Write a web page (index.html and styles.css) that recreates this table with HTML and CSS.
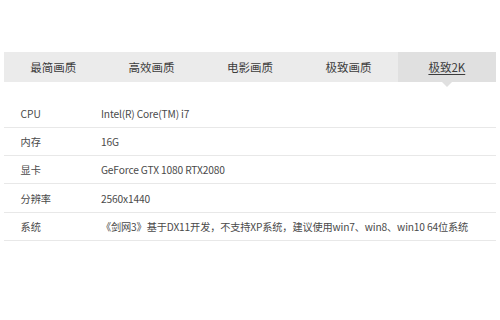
FILE: index.html
```html
<!DOCTYPE html>
<html lang="zh-CN">
<head>
<meta charset="utf-8">
<title>配置</title>
<link rel="stylesheet" href="styles.css">
</head>
<body>
<div class="panel">
  <ul class="tabs">
    <li class="tab">最简画质</li>
    <li class="tab">高效画质</li>
    <li class="tab">电影画质</li>
    <li class="tab">极致画质</li>
    <li class="tab active"><span class="tab-label">极致2K</span></li>
  </ul>
  <div class="specs">
    <div class="row"><div class="key">CPU</div><div class="val">Intel(R) Core(TM) i7</div></div>
    <div class="row"><div class="key">内存</div><div class="val">16G</div></div>
    <div class="row"><div class="key">显卡</div><div class="val">GeForce GTX 1080 RTX2080</div></div>
    <div class="row"><div class="key">分辨率</div><div class="val">2560x1440</div></div>
    <div class="row"><div class="key">系统</div><div class="val">《剑网3》基于DX11开发，不支持XP系统，建议使用win7、win8、win10 64位系统</div></div>
  </div>
</div>
</body>
</html>
```
FILE: styles.css
```css
html, body {
  margin: 0;
  padding: 0;
  background: #ffffff;
}
body {
  font-family: "Noto Sans CJK SC", "Noto Sans", sans-serif;
  color: #4a4a4a;
}
.panel {
  margin: 52px 4px 0 4px;
  width: 492px;
}
.tabs {
  list-style: none;
  margin: 0;
  padding: 0;
  display: flex;
  height: 30px;
  background: #ebebeb;
  font-size: 11.5px;
}
.tab {
  flex: 1 1 0;
  display: flex;
  align-items: center;
  justify-content: center;
  color: #3c3c3c;
  position: relative;
}
.tab.active {
  background: #e0e0e0;
}
.tab.active::after {
  content: "";
  position: absolute;
  left: 50%;
  top: 100%;
  margin-left: -5px;
  border-left: 5px solid transparent;
  border-right: 5px solid transparent;
  border-top: 5px solid #e0e0e0;
}
.tab-label {
  text-decoration: underline;
  text-underline-offset: 2px;
}
.specs {
  margin-top: 17.4px;
  font-size: 10.2px;
}
.row {
  display: flex;
  align-items: center;
  height: 28.33px;
  box-sizing: border-box;
  border-bottom: 1px solid #e8e8e8;
}
.key {
  width: 80.5px;
  padding-left: 16.5px;
  flex: none;
}
.val {
  flex: 1;
  white-space: nowrap;
  letter-spacing: -0.15px;
}
```
